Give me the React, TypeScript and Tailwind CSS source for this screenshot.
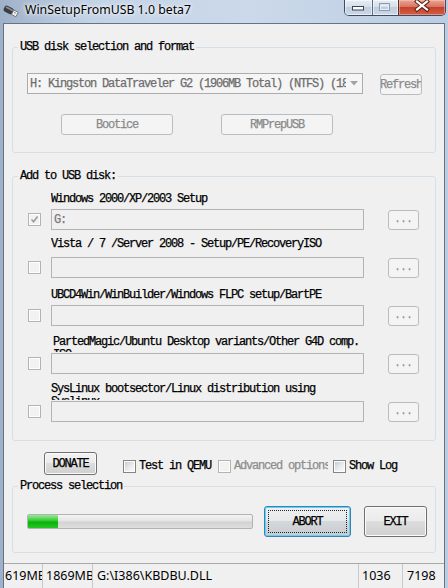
import React from 'react';

type Kind = 'normal' | 'disabled' | 'default';

function Btn({ kind, className = '', children }: { kind: Kind; className?: string; children?: React.ReactNode }) {
  if (kind === 'default') {
    return (
      <div className={`rounded-[3px] border border-[#3c7fb1] bg-[linear-gradient(#eef0f2,#e6e8ea_50%,#d5d8db_50%,#c9ccd0)] shadow-[inset_0_0_0_1px_#5fd2f7] p-[3px] ${className}`}>
        <div className="h-full w-full border border-dotted border-[#222] flex items-center justify-center">{children}</div>
      </div>
    );
  }
  const look =
    kind === 'normal'
      ? 'border-[#707070] bg-[linear-gradient(#f2f2f2,#ebebeb_50%,#dddddd_50%,#cfcfcf)] shadow-[inset_0_0_0_1px_#fbfbfb] text-black'
      : 'border-[#b9bdc0] bg-[#f4f4f4] text-[#8a8a8a]';
  return (
    <div className={`rounded-[3px] border ${look} flex items-center justify-center overflow-hidden whitespace-nowrap ${className}`}>
      {children}
    </div>
  );
}

function Check({ checked = false, dim = false }: { checked?: boolean; dim?: boolean }) {
  return (
    <span className={`w-[13px] h-[13px] shrink-0 border ${dim ? 'border-[#b4b4b4]' : 'border-[#858585]'} bg-[#fdfdfd] p-[1px] flex`}>
      <span
        className={`flex-1 flex items-center justify-center ${
          dim ? 'bg-[#f2f2f2]' : 'bg-[linear-gradient(135deg,#c9cdd3,#eceef0_60%,#f7f7f7)]'
        }`}
      >
        {checked && (
          <svg width="9" height="9" viewBox="0 0 9 9">
            <path d="M1.5 4.5 L3.6 6.8 L7.6 1.6" fill="none" stroke="#9c9c9c" strokeWidth="1.6" />
          </svg>
        )}
      </span>
    </span>
  );
}

function Group({ label, className = '', children }: { label: string; className?: string; children: React.ReactNode }) {
  return (
    <fieldset className={`mx-[8px] border border-[#d5dfe5] rounded-[3px] ${className}`}>
      <legend className="ml-[5px] px-[2px] leading-[14px] text-black">{label}</legend>
      {children}
    </fieldset>
  );
}

function SourceRow({
  lines,
  mt,
  labelH,
  mb,
  leading,
  indent,
  checked = false,
  value = '',
}: {
  lines: string[];
  mt: string;
  labelH: string;
  mb: string;
  leading: string;
  indent: string;
  checked?: boolean;
  value?: string;
}) {
  return (
    <div className={`flex flex-col ${mt}`}>
      <div className={`${indent} ${labelH} ${mb} ${leading} overflow-hidden whitespace-nowrap`}>
        {lines.map((l) => (
          <div key={l}>{l}</div>
        ))}
      </div>
      <div className="flex items-center pl-[15px]">
        <Check checked={checked} dim />
        <div className="ml-[10px] w-[313px] h-[21px] border border-[#b3b3b3] bg-[#f0f0f0] flex items-center pl-[2px] text-[#7a7a7a]">
          {value}
        </div>
        <Btn kind="disabled" className="ml-[24px] w-[31px] h-[20px] text-[10px] tracking-normal">
          ...
        </Btn>
      </div>
    </div>
  );
}

function TitleBar() {
  return (
    <div className="h-[23px] shrink-0 flex items-start">
      <svg className="ml-[3px] mt-[3px]" width="16" height="16" viewBox="0 0 16 16">
        <g transform="rotate(28 8 8)">
          <rect x="0.5" y="5" width="10" height="6.5" rx="2.5" fill="#3b3d42" />
          <rect x="1.5" y="6" width="8" height="1.6" rx="0.8" fill="#8a8e96" />
          <rect x="10" y="5.8" width="5" height="5" fill="#f2f2f2" stroke="#6b6e74" strokeWidth="0.8" />
          <rect x="11.6" y="7.2" width="1.4" height="1.2" fill="#6b6e74" />
        </g>
      </svg>
      <span className="ml-[6px] mt-[2px] font-['Noto_Sans',sans-serif] text-[12.3px] leading-[16px] text-black [text-shadow:0_0_6px_#ffffff,0_0_3px_#ffffff]">
        WinSetupFromUSB 1.0 beta7
      </span>
      <div className="ml-auto mr-[2px] flex h-[16px] border border-t-0 border-[#3d4c62] rounded-b-[5px] overflow-hidden">
        <div className="w-[27px] h-full bg-[linear-gradient(#e6edf5,#d6dfea_45%,#bfcddd_50%,#ccd8e6)] shadow-[inset_0_0_0_1px_rgba(255,255,255,0.55)]">
          <svg width="27" height="16" viewBox="0 0 27 16">
            <rect x="7.5" y="6.5" width="11" height="3.5" fill="#ffffff" stroke="#3a4658" strokeWidth="1" />
          </svg>
        </div>
        <div className="w-[26px] h-full border-l border-[#5c6b80] bg-[linear-gradient(#e6edf5,#d6dfea_45%,#bfcddd_50%,#ccd8e6)] shadow-[inset_0_0_0_1px_rgba(255,255,255,0.55)]">
          <svg width="25" height="16" viewBox="0 0 25 16">
            <rect x="6.5" y="3.5" width="10" height="7" fill="none" stroke="#8d9bb0" strokeWidth="1" />
            <rect x="7.5" y="5.5" width="8" height="4" fill="none" stroke="#e8eef5" strokeWidth="1" />
          </svg>
        </div>
        <div className="w-[47px] h-full border-l border-[#5a2e2a] bg-[linear-gradient(#eaa493,#d97560_45%,#c6412b_50%,#d35e44)] shadow-[inset_0_0_0_1px_rgba(255,210,200,0.45)]">
          <svg width="46" height="16" viewBox="0 0 46 16">
            <path d="M18 1.5 L28 9.5 M28 1.5 L18 9.5" stroke="#5b231a" strokeWidth="4.2" strokeLinecap="square" />
            <path d="M18 1.5 L28 9.5 M28 1.5 L18 9.5" stroke="#ffffff" strokeWidth="2.2" strokeLinecap="square" />
          </svg>
        </div>
      </div>
    </div>
  );
}

export default function App() {
  return (
    <div className="w-[448px] h-[588px] overflow-hidden flex flex-col bg-[linear-gradient(90deg,#9fb1c8,#c3d3e6_20%,#cbd9ea_55%,#bccde1)]">
      <TitleBar />
      <div className="flex-1 mx-[3px] flex flex-col bg-[#f0f0f0] border border-b-0 border-[#62738a] font-['Liberation_Mono',monospace] text-[12px] tracking-[-1.2px] leading-[14px] text-black [-webkit-text-stroke:0.25px]">
        <div className="pt-[16px] flex flex-col">
          <Group label="USB disk selection and format">
            <div className="pl-[14px] pt-[19px] pb-[17px] flex flex-col">
              <div className="flex items-start">
                <div className="w-[336px] h-[21px] border border-[#acacac] bg-[#f5f5f5] flex items-center text-[#6d6d6d]">
                  <span className="flex-1 overflow-hidden whitespace-nowrap pl-[2px]">
                    H: Kingston DataTraveler G2 (1906MB Total) (NTFS) (1869MB free)
                  </span>
                  <span className="w-[16px] flex justify-center">
                    <svg width="8" height="5" viewBox="0 0 8 5">
                      <path d="M0 0 L8 0 L4 4.5 Z" fill="#a3a3a3" />
                    </svg>
                  </span>
                </div>
                <Btn kind="disabled" className="ml-[17px] mt-[1px] w-[42px] h-[21px]">
                  Refresh
                </Btn>
              </div>
              <div className="flex mt-[19px] pl-[34px] gap-[48px]">
                <Btn kind="disabled" className="w-[112px] h-[21px]">
                  Bootice
                </Btn>
                <Btn kind="disabled" className="w-[112px] h-[21px]">
                  RMPrepUSB
                </Btn>
              </div>
            </div>
          </Group>

          <Group label="Add to USB disk:" className="mt-[16px]">
            <div className="pb-[18px] flex flex-col">
              <SourceRow
                lines={['Windows 2000/XP/2003 Setup']}
                mt="mt-[9px]"
                labelH="h-[14px]"
                mb="mb-[3px]"
                leading="leading-[14px]"
                indent="ml-[38px]"
                checked
                value="G:"
              />
              <SourceRow
                lines={['Vista / 7 /Server 2008 - Setup/PE/RecoveryISO']}
                mt="mt-[7px]"
                labelH="h-[14px]"
                mb="mb-[6px]"
                leading="leading-[14px]"
                indent="ml-[38px]"
              />
              <SourceRow
                lines={['UBCD4Win/WinBuilder/Windows FLPC setup/BartPE']}
                mt="mt-[10px]"
                labelH="h-[14px]"
                mb="mb-[3px]"
                leading="leading-[14px]"
                indent="ml-[38px]"
              />
              <SourceRow
                lines={['PartedMagic/Ubuntu Desktop variants/Other G4D comp.', 'ISO']}
                mt="mt-[10px]"
                labelH="h-[16px]"
                mb="mb-[1px]"
                leading="leading-[13px]"
                indent="ml-[40px]"
              />
              <SourceRow
                lines={['SysLinux bootsector/Linux distribution using', 'Syslinux']}
                mt="mt-[9px]"
                labelH="h-[17px]"
                mb="mb-[1px]"
                leading="leading-[13px]"
                indent="ml-[38px]"
              />
            </div>
          </Group>

          <div className="mt-[11px] flex items-start">
            <Btn kind="normal" className="ml-[40px] w-[53px] h-[23px]">
              DONATE
            </Btn>
            <div className="ml-[26px] mt-[7px] h-[14px] flex items-center">
              <div className="w-[95px] flex items-center">
                <Check />
                <span className="ml-[3px] whitespace-nowrap">Test in QEMU</span>
              </div>
              <div className="w-[110px] flex items-center overflow-hidden">
                <Check dim />
                <span className="ml-[3px] whitespace-nowrap text-[#8d8d8d]">Advanced options</span>
              </div>
              <div className="ml-[5px] flex items-center">
                <Check />
                <span className="ml-[3px] whitespace-nowrap">Show Log</span>
              </div>
            </div>
          </div>

          <Group label="Process selection" className="mt-[4px]">
            <div className="pl-[14px] pt-[13px] pb-[15px] flex items-center">
              <div className="w-[226px] h-[15px] border border-[#b2b2b2] rounded-[2px] bg-[linear-gradient(#f4f4f4,#e4e4e4_45%,#d3d3d3_55%,#dedede)] overflow-hidden flex">
                <div className="w-[30px] h-full bg-[linear-gradient(#9be79b,#3ccf3c_40%,#0bb20b_55%,#26c626)]" />
              </div>
              <Btn kind="default" className="ml-[11px] w-[87px] h-[31px]">
                ABORT
              </Btn>
              <Btn kind="normal" className="ml-[13px] w-[63px] h-[31px]">
                EXIT
              </Btn>
            </div>
          </Group>
        </div>

        <div className="mt-[10px] flex-1 flex border-t border-[#a9a9a9] font-['Noto_Sans',sans-serif] tracking-normal text-[12.5px] leading-[23px] text-black [-webkit-text-stroke:0px]">
          <div className="w-[39px] pl-[1px] overflow-hidden whitespace-nowrap border-r border-[#c9c9c9]">619MB</div>
          <div className="w-[50px] pl-[3px] overflow-hidden whitespace-nowrap border-r border-[#c9c9c9]">1869MB</div>
          <div className="w-[266px] pl-[4px] overflow-hidden whitespace-nowrap border-r border-[#c9c9c9]">G:\I386\KBDBU.DLL</div>
          <div className="w-[44px] pl-[3px] overflow-hidden whitespace-nowrap border-r border-[#c9c9c9]">1036</div>
          <div className="flex-1 pl-[4px] overflow-hidden whitespace-nowrap">7198</div>
        </div>
      </div>
    </div>
  );
}
